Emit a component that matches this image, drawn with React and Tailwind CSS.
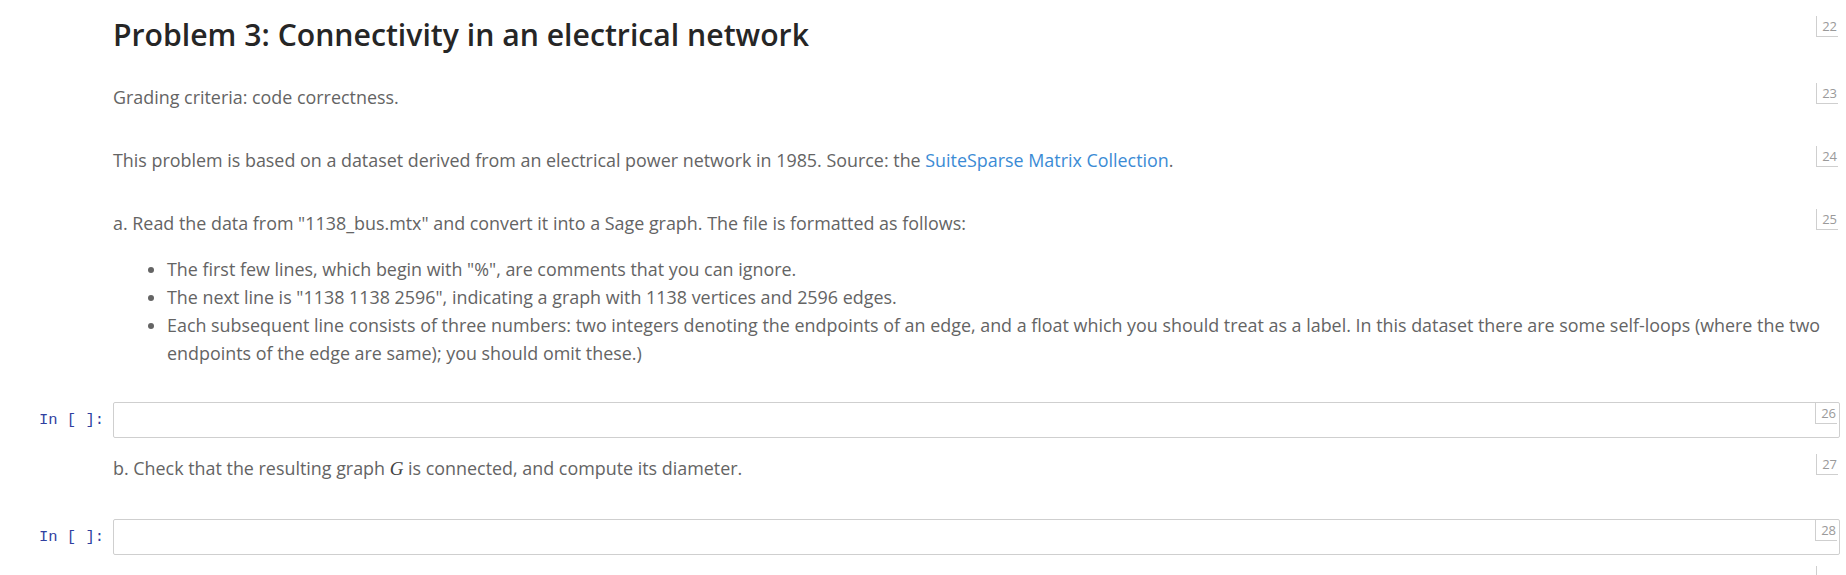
import React from 'react';

const body = "font-['Open_Sans',sans-serif] text-[17.9px] leading-[28px] text-[#646464]";

function CellNum({ n }) {
    return (
        <div className="absolute top-0 right-[2px] w-[22px] h-[21px] border-l border-b border-[#cfcfcf] bg-white text-[13px] leading-[20px] text-right pr-[1px] text-[#9a9a9a] font-['Open_Sans',sans-serif]">
            {n}
        </div>
    );
}

function Markdown({ n, children, pb = 'pb-[35px]' }) {
    return (
        <div className="flex">
            <div className="w-[113px] shrink-0" />
            <div className={`relative flex-1 ${pb}`}>
                <CellNum n={n} />
                {children}
            </div>
        </div>
    );
}

function CodeCell({ n, mb = 'mb-[16px]' }) {
    return (
        <div className={`flex ${mb}`}>
            <div className="w-[113px] shrink-0 pr-[9px] text-right font-['Liberation_Mono',monospace] text-[15.5px] leading-[36px] text-[#303F9F]">
                In&nbsp;[&nbsp;]:
            </div>
            <div className="relative flex-1 h-[36px] border border-[#cfcfcf] rounded-[2px] bg-white">
                <CellNum n={n} />
            </div>
        </div>
    );
}

export default function App() {
    return (
        <div className="w-full h-[575px] overflow-hidden bg-white pt-[16px] pr-[6px]">
            <Markdown n={22} pb="pb-[29px]">
                <h2 className="font-['Open_Sans',sans-serif] font-semibold text-[30.2px] leading-[38px] text-[#262626]">
                    Problem 3: Connectivity in an electrical network
                </h2>
            </Markdown>
            <Markdown n={23}>
                <p className={body}>Grading criteria: code correctness.</p>
            </Markdown>
            <Markdown n={24}>
                <p className={body}>
                    This problem is based on a dataset derived from an electrical power network in 1985. Source: the{' '}
                    <a href="#" className="text-[#3b8bd5]">SuiteSparse Matrix Collection</a>.
                </p>
            </Markdown>
            <Markdown n={25}>
                <p className={body}>
                    a. Read the data from "1138_bus.mtx" and convert it into a Sage graph. The file is formatted as follows:
                </p>
                <ul className={`${body} list-disc pl-[54px] mt-[18px] pr-[16px]`}>
                    <li>The first few lines, which begin with "%", are comments that you can ignore.</li>
                    <li>The next line is "1138 1138 2596", indicating a graph with 1138 vertices and 2596 edges.</li>
                    <li>
                        Each subsequent line consists of three numbers: two integers denoting the endpoints of an edge, and a float which you should treat as a label. In this dataset there are some self-loops (where the two endpoints of the edge are same); you should omit these.)
                    </li>
                </ul>
            </Markdown>
            <CodeCell n={26} />
            <Markdown n={27} pb="pb-[36px]">
                <p className={body}>
                    b. Check that the resulting graph{' '}
                    <span className="font-['Liberation_Serif',serif] italic text-[19px] text-[#444]">G</span>{' '}
                    is connected, and compute its diameter.
                </p>
            </Markdown>
            <CodeCell n={28} mb="mb-[11px]" />
            <Markdown n="">
                <p className={body}>&nbsp;</p>
            </Markdown>
        </div>
    );
}
